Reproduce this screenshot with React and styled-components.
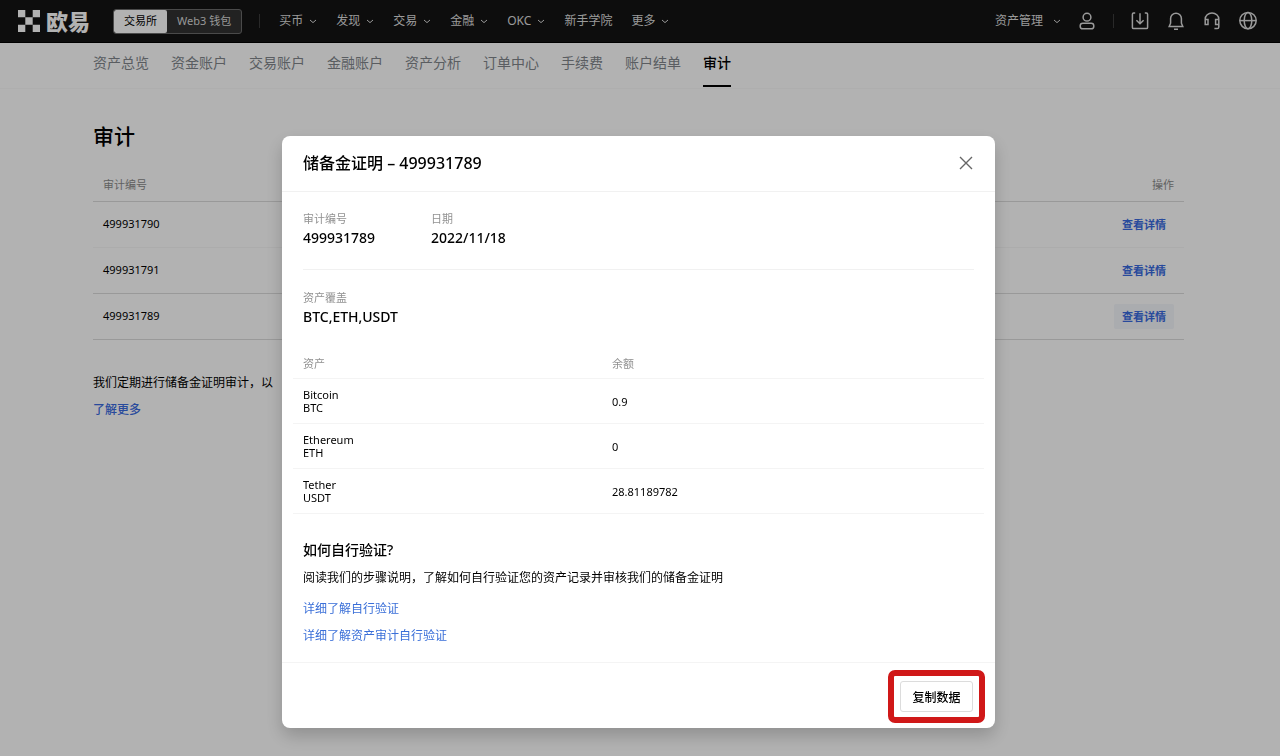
import React from 'react'
import styled, { createGlobalStyle } from 'styled-components'

const GlobalStyle = createGlobalStyle`
* {
  box-sizing: border-box;
}
body {
  margin: 0;
  background: #fff;
  color: #000;
  font-family: 'Noto Sans', 'Noto Sans CJK SC', sans-serif;
  font-size: 12px;
}
button {
  font-family: inherit;
  cursor: pointer;
}
a {
  text-decoration: none;
}
`

const Header = styled.header`
display: flex;
align-items: center;
height: 43px;
padding: 0 22px 0 18px;
background: #131313;
border-bottom: 1px solid #000;
color: #fff;
`

const Logo = styled.a`
display: flex;
align-items: center;
gap: 6px;
margin-right: 23px;
color: #fff;
font-size: 22px;
font-weight: 900;
line-height: 26px;
`

const Switch = styled.div`
display: flex;
height: 25px;
border: 1px solid #6a6a6a;
border-radius: 3px;
overflow: hidden;
background: #323232;
`

const SwitchButton = styled.button`
border: 0;
border-radius: 2px;
padding: 0 10px;
font-size: 11px;
line-height: 22px;
color: ${({ $active }) => $active ? '#000' : '#d8d8d8'};
background: ${({ $active }) => $active ? '#fff' : 'transparent'};
`

const Divider = styled.span`
width: 1px;
height: 14px;
background: #3c3c3c;
`

const Nav = styled.nav`
display: flex;
flex: 1;
align-items: center;
gap: 19px;
margin-left: 17px;
`

const NavItem = styled.a`
display: flex;
align-items: center;
gap: ${({ $wide }) => $wide ? '10px' : '6px'};
color: #ddd;
font-size: 12px;
line-height: 18px;
white-space: nowrap;
`

const Tools = styled.div`
display: flex;
align-items: center;
gap: 16px;
`

const IconButton = styled.button`
display: flex;
padding: 0;
border: 0;
background: none;
color: #ddd;
`

const Tabs = styled.nav`
display: flex;
gap: 22px;
height: 46px;
padding: 0 96px 0 93px;
border-bottom: 1px solid #fafafa;
`

const Tab = styled.a`
height: 44px;
padding-top: 9px;
font-size: 14px;
line-height: 21px;
white-space: nowrap;
color: ${({ $active }) => $active ? '#000' : '#81868c'};
font-weight: ${({ $active }) => $active ? 500 : 400};
border-bottom: 2px solid ${({ $active }) => $active ? '#000' : 'transparent'};
`

const Content = styled.main`
padding: 31px 96px 0 93px;
`

const PageTitle = styled.h1`
margin: 0 0 18px;
font-size: 21px;
font-weight: 500;
line-height: 32px;
`

const AuditTable = styled.table`
width: 100%;
border-collapse: collapse;
margin-bottom: 34px;
font-size: 11px;
line-height: 16px;
th, td {
  padding: 0 10px;
  text-align: left;
  border-bottom: 1px solid #dcdcdc;
}
th {
  height: 31px;
  color: #8c8c8c;
  font-weight: 400;
}
td {
  height: 46px;
}
th:last-child, td:last-child {
  text-align: right;
}
`

const AuditRow = styled.tr`
&& td {
  border-color: ${({ $faint }) => $faint ? '#f6f6f6' : '#dcdcdc'};
}
`

const DetailButton = styled.button`
height: 25px;
padding: 0 8px;
border: 0;
border-radius: 2px;
font-size: 11px;
font-weight: 700;
color: #3a6be0;
background: ${({ $focused }) => $focused ? '#f4f6fb' : 'transparent'};
`

const Note = styled.p`
margin: 0 0 9px;
line-height: 18px;
`

const MoreLink = styled.a`
color: #3a6be0;
font-weight: 500;
line-height: 18px;
`

const Overlay = styled.div`
position: fixed;
inset: 0;
display: flex;
align-items: center;
justify-content: center;
padding: 108px 3px 0 0;
background: rgba(0, 0, 0, .3);
`

const Modal = styled.section`
width: 713px;
max-width: 96%;
border-radius: 8px;
background: #fff;
box-shadow: 0 8px 18px rgba(0, 0, 0, .2);
`

const ModalHeader = styled.div`
display: flex;
align-items: center;
justify-content: space-between;
height: 56px;
padding: 0 22px 0 21px;
border-bottom: 1px solid #f1f1f1;
`

const ModalTitle = styled.h2`
margin: 0;
font-size: 16px;
font-weight: 500;
line-height: 24px;
`

const CloseButton = styled(IconButton)`
color: #666;
`

const ModalBody = styled.div`
padding: 19px 21px 8px;
`

const Facts = styled.dl`
display: flex;
margin: 0;
padding-bottom: ${({ $lined }) => $lined ? '20px' : '21px'};
margin-bottom: ${({ $lined }) => $lined ? '20px' : '0'};
border-bottom: ${({ $lined }) => $lined ? '1px solid #f1f1f1' : '0'};
`

const Fact = styled.div`
min-width: 128px;
dt {
  color: #929292;
  font-size: 11px;
  line-height: 16px;
}
dd {
  margin: 0;
  font-size: 14px;
  font-weight: 500;
  line-height: 22px;
}
`

const AssetTable = styled.table`
width: calc(100% + 20px);
margin: 0 -10px 25px;
border-collapse: collapse;
table-layout: fixed;
font-size: 11px;
line-height: 13px;
th, td {
  padding: 0 10px;
  text-align: left;
  border-bottom: 1px solid #f4f4f4;
}
th {
  height: 30px;
  color: #929292;
  font-weight: 400;
}
th:first-child {
  width: 309px;
}
td {
  height: 45px;
}
`

const Symbol = styled.div`
white-space: nowrap;
`

const HelpTitle = styled.h3`
margin: 0 0 9px;
font-size: 14px;
font-weight: 500;
line-height: 21px;
`

const HelpText = styled.p`
margin: 0 0 13px;
line-height: 18px;
`

const HelpLink = styled.a`
display: block;
width: fit-content;
margin-bottom: 9px;
color: #3a6fd8;
line-height: 18px;
`

const ModalFooter = styled.div`
display: flex;
justify-content: flex-end;
padding: 7px 10px 5px;
border-top: 1px solid #f4f4f4;
`

const Highlight = styled.div`
padding: 5px 6px;
border: 6px solid #d01818;
border-radius: 7px;
`

const CopyButton = styled.button`
display: block;
width: 73px;
height: 31px;
padding: 0;
border: 1px solid #dcdcdc;
border-radius: 3px;
background: #fff;
font-size: 12px;
font-weight: 500;
`

const navItems = [
  { label: '买币', menu: true },
  { label: '发现', menu: true },
  { label: '交易', menu: true },
  { label: '金融', menu: true },
  { label: 'OKC', menu: true },
  { label: '新手学院' },
  { label: '更多', menu: true }
]

const tabs = ['资产总览', '资金账户', '交易账户', '金融账户', '资产分析', '订单中心', '手续费', '账户结单', '审计']

const audits = ['499931790', '499931791', '499931789']

const assets = [
  { name: 'Bitcoin', symbol: 'BTC', balance: '0.9' },
  { name: 'Ethereum', symbol: 'ETH', balance: '0' },
  { name: 'Tether', symbol: 'USDT', balance: '28.81189782' }
]

const Chevron = () => (
  <svg width='8' height='8' viewBox='0 0 8 8' fill='none' stroke='currentColor' aria-hidden='true'>
    <path d='M1 3l3 2.6L7 3' />
  </svg>
)

const LogoMark = () => (
  <svg width='22' height='22' viewBox='0 0 22 22' fill='currentColor' aria-hidden='true'>
    <path d='M0 0h7.3v7.3H0zM14.7 0H22v7.3h-7.3zM7.3 7.3h7.4v7.4H7.3zM0 14.7h7.3V22H0zM14.7 14.7H22V22h-7.3z' />
  </svg>
)

const Icon = ({ children }) => (
  <svg width='20' height='20' viewBox='0 0 20 20' fill='none' stroke='currentColor' strokeWidth='1.5' aria-hidden='true'>
    {children}
  </svg>
)

const TopBar = () => (
  <Header>
    <Logo href='#'><LogoMark />欧易</Logo>
    <Switch>
      <SwitchButton $active>交易所</SwitchButton>
      <SwitchButton>Web3 钱包</SwitchButton>
    </Switch>
    <Nav>
      <Divider />
      {navItems.map(({ label, menu }) => (
        <NavItem key={label} href='#'>{label}{menu ? <Chevron /> : ''}</NavItem>
      ))}
    </Nav>
    <Tools>
      <NavItem $wide href='#'>资产管理<Chevron /></NavItem>
      <IconButton aria-label='账户'>
        <Icon>
          <circle cx='10' cy='6.2' r='3.9' />
          <rect x='3.2' y='12.2' width='13.6' height='5.6' rx='2.6' />
        </Icon>
      </IconButton>
      <Divider />
      <IconButton aria-label='下载'>
        <Icon>
          <path d='M5.200 2H3.600A1.200 1.200 0 0 0 2.400 3.200v13.200a1.200 1.200 0 0 0 1.200 1.200h12.800a1.200 1.200 0 0 0 1.200-1.200V3.200A1.200 1.200 0 0 0 16.400 2H14.800M10 2.200v10.600M6.400 9.200l3.600 3.600 3.600-3.600' />
        </Icon>
      </IconButton>
      <IconButton aria-label='通知'>
        <Icon>
          <path d='M3.200 15.400h13.600l-1.400-3.200V7.600a5.400 5.400 0 0 0-10.800 0v4.600zM8 18.200h4' />
        </Icon>
      </IconButton>
      <IconButton aria-label='客服'>
        <Icon>
          <path d='M3.200 13V8.200a6.800 6.200 0 0 1 13.600 0v7.800a1.600 1.600 0 0 1-1.600 1.600H12.400M3.200 8.600h2.800v4.800H3.200zM13.600 8.600h3.200v4.800h-3.200z' />
        </Icon>
      </IconButton>
      <IconButton aria-label='语言'>
        <Icon>
          <circle cx='10' cy='9.600' r='8.200' />
          <ellipse cx='10' cy='9.600' rx='3.800' ry='8.200' />
          <path d='M1.800 9.600h16.400' />
        </Icon>
      </IconButton>
    </Tools>
  </Header>
)

const ProofModal = () => (
  <Overlay>
    <Modal role='dialog' aria-modal='true' aria-labelledby='proof-title'>
      <ModalHeader>
        <ModalTitle id='proof-title'>储备金证明 – 499931789</ModalTitle>
        <CloseButton aria-label='关闭'>
          <svg width='14' height='14' viewBox='0 0 14 14' stroke='currentColor' strokeWidth='1.4'>
            <path d='M1 1l12 12M13 1L1 13' />
          </svg>
        </CloseButton>
      </ModalHeader>
      <ModalBody>
        <Facts $lined>
          <Fact><dt>审计编号</dt><dd>499931789</dd></Fact>
          <Fact><dt>日期</dt><dd>2022/11/18</dd></Fact>
        </Facts>
        <Facts>
          <Fact><dt>资产覆盖</dt><dd>BTC,ETH,USDT</dd></Fact>
        </Facts>
        <AssetTable>
          <thead>
            <tr><th>资产</th><th>余额</th></tr>
          </thead>
          <tbody>
            {assets.map(({ name, symbol, balance }) => (
              <tr key={symbol}>
                <td>{name}<Symbol>{symbol}</Symbol></td>
                <td>{balance}</td>
              </tr>
            ))}
          </tbody>
        </AssetTable>
        <HelpTitle>如何自行验证?</HelpTitle>
        <HelpText>阅读我们的步骤说明，了解如何自行验证您的资产记录并审核我们的储备金证明</HelpText>
        <HelpLink href='#'>详细了解自行验证</HelpLink>
        <HelpLink href='#'>详细了解资产审计自行验证</HelpLink>
      </ModalBody>
      <ModalFooter>
        <Highlight>
          <CopyButton>复制数据</CopyButton>
        </Highlight>
      </ModalFooter>
    </Modal>
  </Overlay>
)

export default () => (
  <>
    <GlobalStyle />
    <TopBar />
    <Tabs>
      {tabs.map(tab => <Tab key={tab} href='#' $active={tab === '审计'}>{tab}</Tab>)}
    </Tabs>
    <Content>
      <PageTitle>审计</PageTitle>
      <AuditTable>
        <thead>
          <tr><th>审计编号</th><th>操作</th></tr>
        </thead>
        <tbody>
          {audits.map((id, index) => (
            <AuditRow key={id} $faint={index === 0}>
              <td>{id}</td>
              <td><DetailButton $focused={index === 2}>查看详情</DetailButton></td>
            </AuditRow>
          ))}
        </tbody>
      </AuditTable>
      <Note>我们定期进行储备金证明审计，以</Note>
      <MoreLink href='#'>了解更多</MoreLink>
    </Content>
    <ProofModal />
  </>
)
